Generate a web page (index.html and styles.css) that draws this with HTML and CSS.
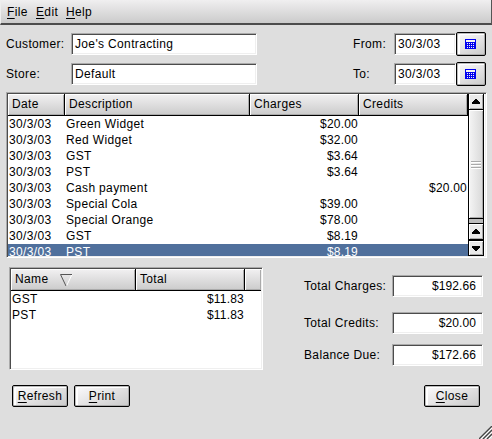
FILE: index.html
```html
<!DOCTYPE html>
<html lang="en">
<head>
<meta charset="utf-8">
<title>Customer Transactions</title>
<link rel="stylesheet" href="styles.css">
</head>
<body>
<nav class="menu"><span class="m-file"><u>F</u>ile</span><span class="m-edit"><u>E</u>dit</span><span class="m-help"><u>H</u>elp</span></nav>
<main>
  <section class="filters">
    <label>Customer:</label><div class="field">Joe's Contracting</div><label class="date-label">From:</label>
    <div class="field date">30/3/03</div>
    <button class="pick"><svg width="11" height="10" shape-rendering="crispEdges"><path fill="#0000f0" d="M0 0h11v10H0z"/><path fill="#f4f4f4" d="M1 1h9v2H1zM2 4h1v1H2zM4 4h1v1H4zM6 4h1v1H6zM8 4h1v1H8zM2 6h1v1H2zM4 6h1v1H4zM6 6h1v1H6zM8 6h1v1H8zM2 8h1v1H2zM4 8h1v1H4zM6 8h1v1H6zM8 8h1v1H8z"/></svg></button>
    <label>Store:</label><div class="field">Default</div><label class="date-label">To:</label>
    <div class="field date">30/3/03</div>
    <button class="pick"><svg width="11" height="10" shape-rendering="crispEdges"><path fill="#0000f0" d="M0 0h11v10H0z"/><path fill="#f4f4f4" d="M1 1h9v2H1zM2 4h1v1H2zM4 4h1v1H4zM6 4h1v1H6zM8 4h1v1H8zM2 6h1v1H2zM4 6h1v1H4zM6 6h1v1H6zM8 6h1v1H8zM2 8h1v1H2zM4 8h1v1H4zM6 8h1v1H6zM8 8h1v1H8z"/></svg></button>
  </section>
  <section class="list entries">
    <div class="rows">
      <div class="row head"><span>Date</span><span>Description</span><span>Charges</span><span>Credits</span></div>
      <div class="row"><span>30/3/03</span><span>Green Widget</span><b>$20.00</b><b></b></div>
      <div class="row"><span>30/3/03</span><span>Red Widget</span><b>$32.00</b><b></b></div>
      <div class="row"><span>30/3/03</span><span>GST</span><b>$3.64</b><b></b></div>
      <div class="row"><span>30/3/03</span><span>PST</span><b>$3.64</b><b></b></div>
      <div class="row"><span>30/3/03</span><span>Cash payment</span><b></b><b>$20.00</b></div>
      <div class="row"><span>30/3/03</span><span>Special Cola</span><b>$39.00</b><b></b></div>
      <div class="row"><span>30/3/03</span><span>Special Orange</span><b>$78.00</b><b></b></div>
      <div class="row"><span>30/3/03</span><span>GST</span><b>$8.19</b><b></b></div>
      <div class="row selected"><span>30/3/03</span><span>PST</span><b>$8.19</b><b></b></div>
    </div>
    <div class="scroll">
      <div class="arrow"><svg width="8" height="5" shape-rendering="crispEdges"><path d="M3 0h2v1h1v1h1v1h1v2H0V3h1V2h1V1h1z"/></svg></div>
      <div class="thumb"><i></i><i></i><i></i></div>
      <div class="trough"></div>
      <div class="arrow"><svg width="8" height="5" shape-rendering="crispEdges"><path d="M3 0h2v1h1v1h1v1h1v2H0V3h1V2h1V1h1z"/></svg></div>
      <div class="arrow last"><svg width="8" height="5" shape-rendering="crispEdges"><path d="M0 0h8v2H7v1H6v1H5v1H3V4H2V3H1V2H0z"/></svg></div>
    </div>
  </section>
  <div class="summary">
    <section class="list taxes">
      <div class="row head"><span>Name<svg class="sort" width="13" height="13"><path d="M12 .5L6.5 12" stroke="#fff" fill="none"/><path d="M12 .5H.5L6 12" stroke="#555" fill="none"/></svg></span><span>Total</span><span></span></div>
      <div class="row"><span>GST</span><b>$11.83</b></div>
      <div class="row"><span>PST</span><b>$11.83</b></div>
    </section>
    <section class="totals">
      <label>Total Charges:</label><div class="field">$192.66</div>
      <label>Total Credits:</label><div class="field">$20.00</div>
      <label>Balance Due:</label><div class="field">$172.66</div>
    </section>
  </div>
  <footer><button><u>R</u>efresh</button><button><u>P</u>rint</button><button class="close"><u>C</u>lose</button></footer>
</main>
<svg class="grip" width="13" height="13"><path d="M0 13L13 0M4 13L13 4M8 13L13 8" stroke="#444" stroke-width="1.3"/><path d="M2 13L13 2M6 13L13 6M10 13L13 10" stroke="#fff"/></svg>
</body>
</html>
```
FILE: styles.css
```css
* { box-sizing: border-box; }
body {
  margin: 0;
  width: 492px;
  height: 439px;
  overflow: hidden;
  position: relative;
  background: #dedede;
  color: #000;
  font: 12px/16px "Liberation Sans", Arial, sans-serif;
  letter-spacing: .35px;
}
b { font-weight: normal; letter-spacing: .2px; }
u { text-underline-offset: 2px; text-decoration-thickness: 1px; }
svg { display: block; }

.menu {
  display: flex;
  height: 25px;
  padding: 4px 6px 0;
  border-left: 1px solid #eee;
  border-right: 1px solid #555;
  border-bottom: 2px solid #4c4c4c;
  background: linear-gradient(#f0eff0, #cbcbcb);
}
.m-file { width: 29px; }
.m-edit { width: 30px; }

.filters {
  display: grid;
  grid-template-columns: 65px 186px 137px 62px 30px;
  grid-auto-rows: 30px;
  align-items: center;
  padding: 4px 6px 0;
}
.date-label { padding-left: 96px; }
.field {
  height: 22px;
  padding: 2px 3px;
  background: #fff;
  border: 1px solid;
  border-color: #aaa #fff #fff #aaa;
  box-shadow: inset 1px 1px #4c4c4c, inset -1px -1px #efefef;
}
button {
  width: 56px;
  height: 22px;
  padding: 0 0 1px;
  display: flex;
  align-items: center;
  justify-content: center;
  border: 1px solid #000;
  border-radius: 2px;
  font: inherit;
  letter-spacing: inherit;
  color: #000;
  background: linear-gradient(155deg, #f8f7f8 10%, #cacaca);
  box-shadow: inset -1px -1px #aaa, inset 1px 1px #bbb, inset 3px 2px #fff;
}
.pick { width: 30px; height: 24px; padding: 0 2px 0 0; }

.list {
  background: #fff;
  border: 1px solid;
  border-color: #aaa #fff #fff #aaa;
  padding: 1px;
  box-shadow: inset 1px 1px #4c4c4c, inset -1px -1px #efefef;
}
.row { display: grid; height: 16px; }
.row span { padding-left: 1px; white-space: nowrap; }
.row b { text-align: right; }
.head { height: 22px; border-bottom: 1px solid #000; }
.row.head span {
  padding: 2px 0 0 4px;
  border-right: 1px solid #000;
  background: linear-gradient(#f2f1f2, #cbcbcb);
  box-shadow: inset 1px 1px #fff, inset -1px -1px #aaa;
}
.entries {
  display: flex;
  width: 481px;
  height: 166px;
  margin: 3px 0 0 6px;
}
.rows { width: 460px; height: 162px; overflow: hidden; }
.entries .row { grid-template-columns: 57px 185px 109px 109px; }
.entries .row b { padding-right: 1px; }
.selected { background: #50709c; color: #fff; }

.scroll {
  width: 16px;
  display: flex;
  flex-direction: column;
  border: solid #000;
  border-width: 0 1px 1px;
}
.arrow {
  flex: none;
  height: 16px;
  display: grid;
  place-items: center;
  background: #e9e9e9;
  border-bottom: 1px solid #000;
  box-shadow: inset 1px 1px #fff, inset -1px -1px #aaa;
}
.arrow.last { border-top: 1px solid #000; border-bottom: 0; height: 15px; }
.thumb {
  flex: 1;
  display: flex;
  flex-direction: column;
  align-items: center;
  justify-content: center;
  gap: 1px;
  padding-top: 2px;
  background: linear-gradient(90deg, #f5f5f5, #d8d8d8);
  border-bottom: 1px solid #000;
  box-shadow: inset 1px 1px #fff, inset -1px -1px #aaa;
}
.thumb i { width: 10px; height: 2px; border-top: 1px solid #aaa; border-bottom: 1px solid #fff; }
.trough { height: 5px; background: #bbb; border-bottom: 1px solid #000; }

.summary { display: flex; height: 112px; padding: 9px 9px 0; }
.taxes { width: 254px; height: 103px; }
.taxes .row { grid-template-columns: 125px 109px 1fr; }
.taxes .row b { padding-right: 1px; }
.taxes .head span:first-child { display: flex; }
.taxes .head span:last-child { border-right: 0; }
.sort { margin: 3px 0 0 12px; }
.totals {
  display: grid;
  grid-template-columns: 88px 91px;
  grid-template-rows: 37px 32px 22px;
  margin: 8px 0 0 41px;
}
.totals label { padding-top: 3px; }
.totals .field { text-align: right; padding-right: 6px; letter-spacing: .1px; }

footer { display: flex; gap: 6px; padding: 15px 12px 0; }
.close { margin-left: auto; }
.grip { position: absolute; right: 0; bottom: 0; }
```
